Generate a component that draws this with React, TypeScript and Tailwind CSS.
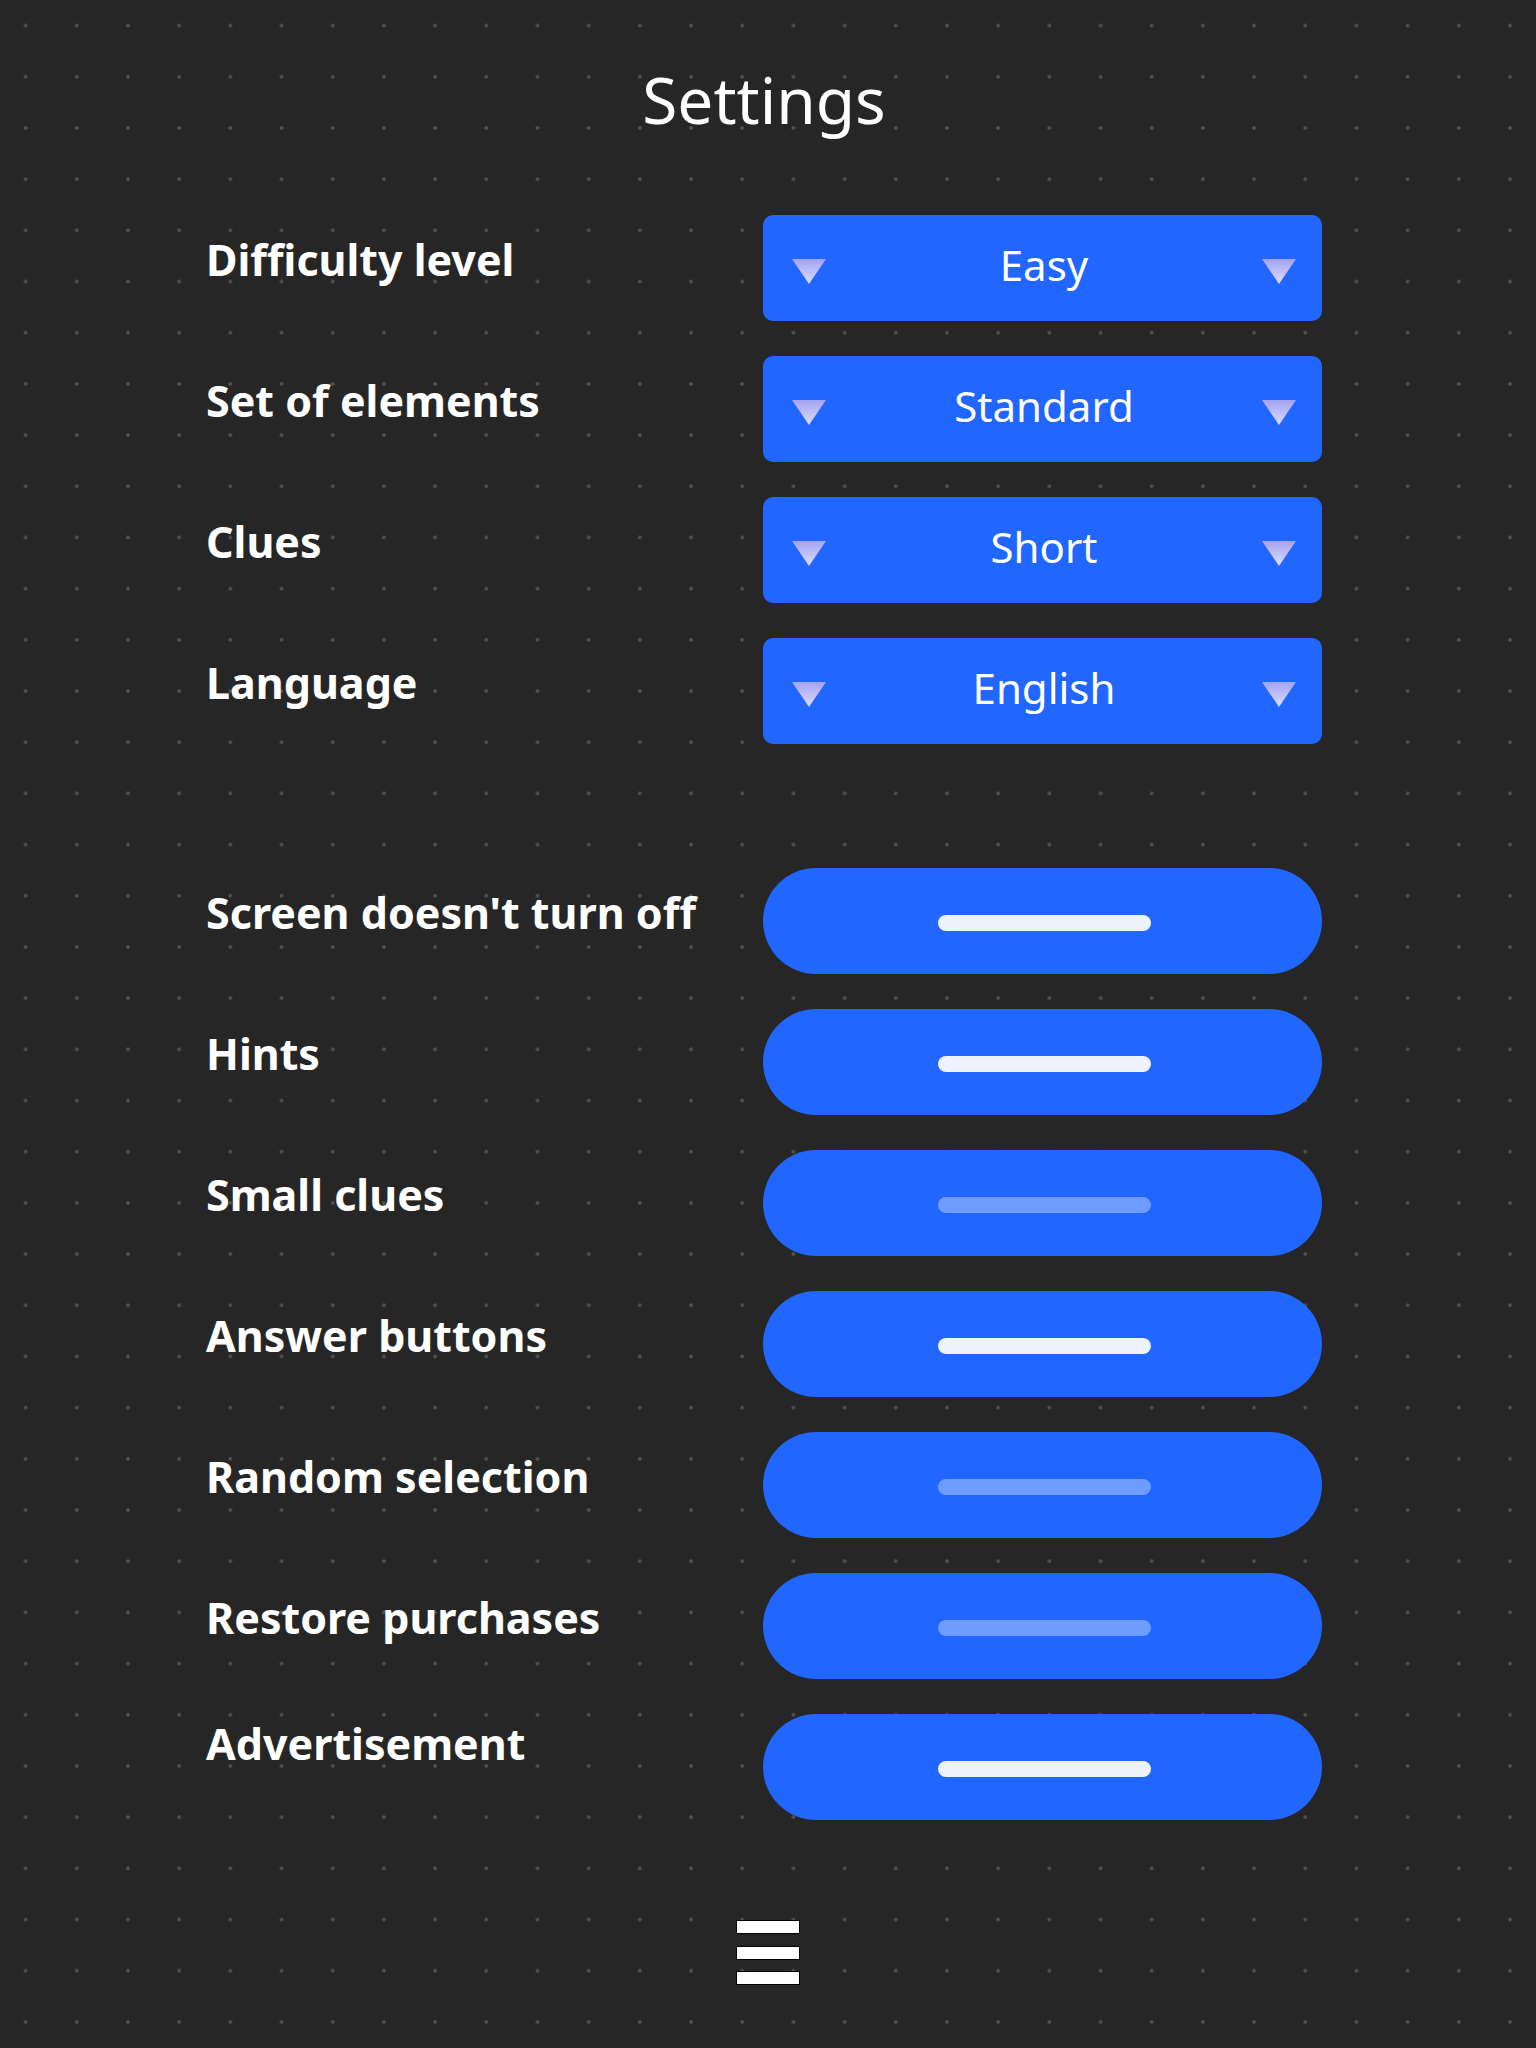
import React from 'react';

const dropdowns = [
  { label: 'Difficulty level', value: 'Easy' },
  { label: 'Set of elements', value: 'Standard' },
  { label: 'Clues', value: 'Short' },
  { label: 'Language', value: 'English' },
];

const toggles = [
  { label: "Screen doesn't turn off", on: true },
  { label: 'Hints', on: true },
  { label: 'Small clues', on: false },
  { label: 'Answer buttons', on: true },
  { label: 'Random selection', on: false },
  { label: 'Restore purchases', on: false },
  { label: 'Advertisement', on: true, lifted: true },
];

const Arrow = () => (
  <svg width="34" height="25" viewBox="0 0 34 25" className="block mt-[7px]">
    <defs>
      <linearGradient id="arrowFill" x1="0" y1="0" x2="0" y2="1">
        <stop offset="0" stopColor="#a3a3f2" />
        <stop offset="1" stopColor="#dcdcff" />
      </linearGradient>
    </defs>
    <polygon points="0,0 34,0 17,25" fill="url(#arrowFill)" />
  </svg>
);

const Label = ({ text, lifted }: { text: string; lifted?: boolean }) => (
  <span
    className={
      'text-[43px] leading-none font-bold text-white whitespace-nowrap ' +
      (lifted ? '-mt-[48px]' : '-mt-[18px]')
    }
  >
    {text}
  </span>
);

const App = () => {
  return (
    <div className="min-h-[2048px] bg-[#262626] bg-[radial-gradient(circle,#525252_1.4px,transparent_2.2px)] bg-[length:51.2px_51.2px] font-['Noto_Sans',sans-serif] text-white">
      <div className="ml-[206px] w-[1116px] pt-[68px]">
        <h1 className="text-center text-[64px] leading-none font-normal">Settings</h1>

        <div className="mt-[83px] flex flex-col gap-[35px]">
          {dropdowns.map((d) => (
            <div key={d.label} className="grid grid-cols-[557px_559px] items-center h-[106px]">
              <Label text={d.label} />
              <div className="h-[106px] rounded-[10px] bg-[#2166fe] pl-[29px] pr-[26px] grid grid-cols-[34px_1fr_34px] items-center">
                <Arrow />
                <span className="-mt-[6px] text-center text-[42px] leading-none">{d.value}</span>
                <Arrow />
              </div>
            </div>
          ))}
        </div>

        <div className="mt-[124px] flex flex-col gap-[35px]">
          {toggles.map((t) => (
            <div key={t.label} className="grid grid-cols-[557px_559px] items-center h-[106px]">
              <Label text={t.label} lifted={t.lifted} />
              <div className="h-[106px] rounded-full bg-[#2166fe] flex items-center justify-center">
                <div
                  className={
                    'ml-[3px] mt-[3px] w-[213px] h-[16px] rounded-full ' +
                    (t.on ? 'bg-[#eef2fd]' : 'bg-[#6f9cff]')
                  }
                />
              </div>
            </div>
          ))}
        </div>
      </div>

      <div className="mt-[100px] flex flex-col items-center gap-[11.5px]">
        <div className="w-[64px] h-[14px] bg-white border border-black" />
        <div className="w-[64px] h-[14px] bg-white border border-black" />
        <div className="w-[64px] h-[14px] bg-white border border-black" />
      </div>
    </div>
  );
};

export default App;
